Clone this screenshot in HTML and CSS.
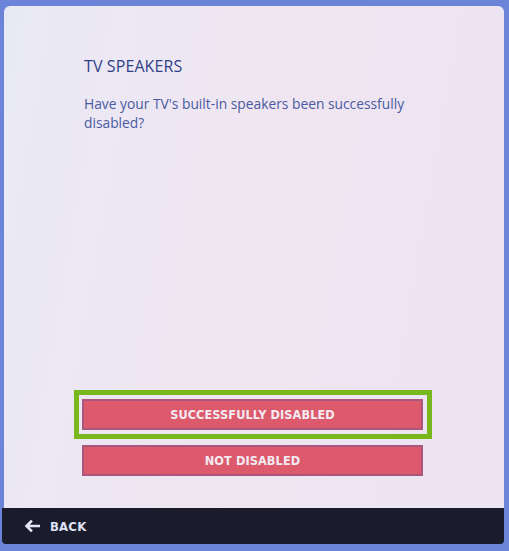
FILE: index.html
```html
<!DOCTYPE html>
<html lang="en">
<head>
<meta charset="utf-8">
<title>TV Speakers</title>
<link rel="stylesheet" href="styles.css">
</head>
<body>
<div class="screen">
  <section class="dialog">
    <h1 class="dialog-title">TV SPEAKERS</h1>
    <p class="dialog-text">Have your TV's built-in speakers been successfully<br>disabled?</p>
    <div class="choices">
      <div class="focus-ring">
        <button class="choice">SUCCESSFULLY DISABLED</button>
      </div>
      <button class="choice choice-plain">NOT DISABLED</button>
    </div>
  </section>
  <footer class="nav-bar">
    <svg class="back-arrow" width="16" height="12" viewBox="0 0 16 12" aria-hidden="true">
      <path d="M15 6H4M7 1.5L2.5 6L7 10.5" fill="none" stroke="#e4e6f6" stroke-width="2.6" stroke-linecap="square"/>
    </svg>
    <span class="back-label">BACK</span>
  </footer>
</div>
</body>
</html>
```
FILE: styles.css
```css
html, body {
  margin: 0;
  padding: 0;
}

body {
  width: 509px;
  height: 551px;
  overflow: hidden;
  background: #6c84d8;
  font-family: "Open Sans", "DejaVu Sans", sans-serif;
}

.screen {
  display: flex;
  flex-direction: column;
  padding: 6px 5px 0 4px;
}

.dialog {
  height: 502px;
  box-sizing: border-box;
  border-radius: 6px 6px 0 0;
  background: linear-gradient(100deg, #e9e9f6 0%, #efe6f1 45%, #ede4f3 100%);
  padding: 50px 0 0 80px;
  display: flex;
  flex-direction: column;
}

.dialog-title {
  margin: 0;
  font-size: 16px;
  font-weight: 400;
  line-height: 20px;
  color: #2f3f88;
  letter-spacing: 0.1px;
}

.dialog-text {
  margin: 18px 0 0 0;
  font-size: 13.8px;
  line-height: 19px;
  color: #4a5aa0;
}

.choices {
  margin-top: auto;
  margin-left: -10px;
  padding-bottom: 32px;
  display: flex;
  flex-direction: column;
  gap: 6px;
}

.focus-ring {
  width: 358px;
  box-sizing: border-box;
  border: 5px solid #79b81c;
  padding: 4px 4px 4px 3px;
}

.choice {
  display: block;
  width: 341px;
  height: 31px;
  margin: 0;
  padding: 0;
  box-sizing: border-box;
  border: 2px solid #a9577f;
  background: #dc5a6c;
  color: #f3eaf2;
  font-family: "DejaVu Sans Condensed", "DejaVu Sans", sans-serif;
  font-weight: 700;
  font-size: 12.6px;
  letter-spacing: 0.1px;
  text-align: center;
}

.choice-plain {
  margin-left: 8px;
}

.nav-bar {
  margin-left: -2px;
  height: 36px;
  box-sizing: border-box;
  background: #1a1c2c;
  border-radius: 0 0 4px 4px;
  display: flex;
  align-items: center;
  padding: 0 0 0 22px;
  gap: 10px;
}

.back-arrow {
  display: block;
}

.back-label {
  font-family: "DejaVu Sans Condensed", "DejaVu Sans", sans-serif;
  font-weight: 700;
  font-size: 13px;
  color: #dfe2f6;
  letter-spacing: 0.2px;
}
```
